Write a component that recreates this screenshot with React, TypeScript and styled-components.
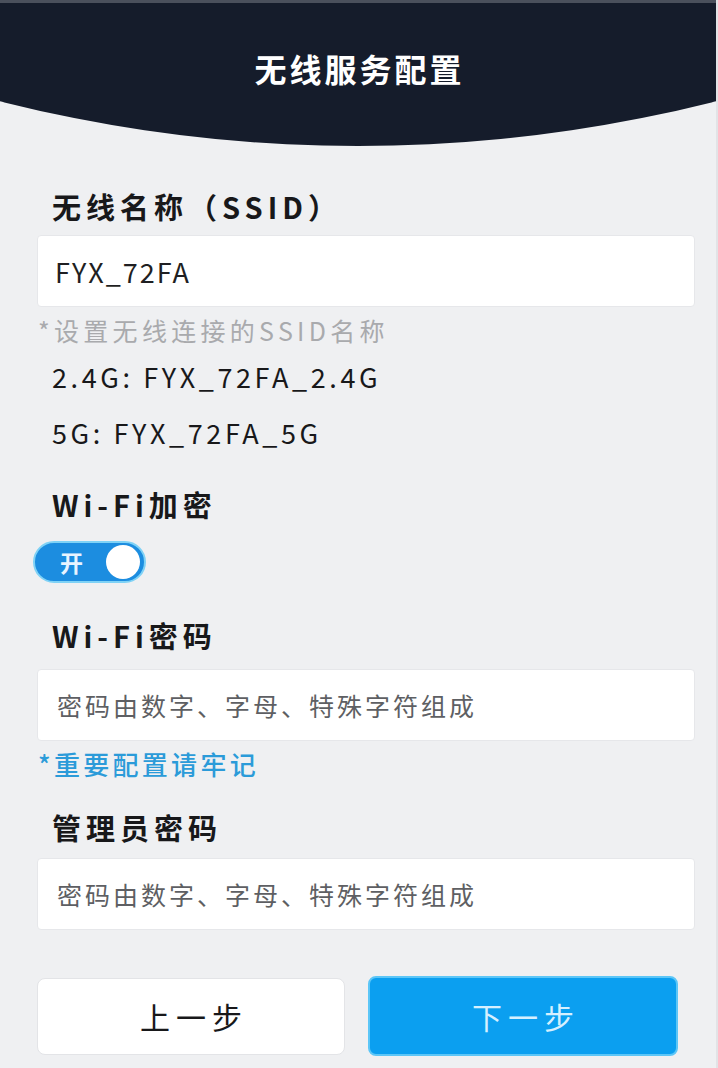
import React from "react";
import styled, { createGlobalStyle } from "styled-components";

const Global = createGlobalStyle`
  html, body { margin: 0; padding: 0; background: #eff0f2; }
  body { font-family: "Noto Sans CJK SC", "Noto Sans", sans-serif; }
  * { box-sizing: border-box; }
`;

const Page = styled.div`
  width: 718px;
  height: 1068px;
  background: #eff0f2;
  border-right: 2px solid #e2e3e6;
  overflow: hidden;
  display: flex;
  flex-direction: column;
`;

const Header = styled.header`
  height: 146px;
  background: #151c2b;
  border-top: 3px solid #4a505c;
  clip-path: circle(1455px at 50% calc(146px - 1455px));
  display: flex;
  justify-content: center;
  padding-top: 45px;
`;

const Title = styled.h1`
  margin: 0;
  padding-left: 3px;
  font-size: 32px;
  line-height: 40px;
  font-weight: 700;
  letter-spacing: 3px;
  color: #ffffff;
`;

const Main = styled.main`
  display: flex;
  flex-direction: column;
  padding: 0 21px 0 37px;
`;

const Label = styled.div<{ $mt: number }>`
  margin-top: ${(p) => p.$mt}px;
  padding-left: 15px;
  font-size: 29px;
  line-height: 40px;
  font-weight: 700;
  letter-spacing: 5px;
  color: #18181a;
`;

const Input = styled.div<{ $mt: number; $placeholder?: boolean }>`
  margin-top: ${(p) => p.$mt}px;
  height: 72px;
  background: #ffffff;
  border: 1px solid #e6e7ea;
  border-radius: 4px;
  display: flex;
  align-items: center;
  padding-left: ${(p) => (p.$placeholder ? 19 : 17)}px;
  font-size: ${(p) => (p.$placeholder ? 25 : 27)}px;
  letter-spacing: ${(p) => (p.$placeholder ? 3 : 2)}px;
  color: ${(p) => (p.$placeholder ? "#5e5f63" : "#1f1f22")};
`;

const Hint = styled.div<{ $mt: number; $blue?: boolean }>`
  margin-top: ${(p) => p.$mt}px;
  padding-left: 1px;
  font-size: ${(p) => (p.$blue ? 26 : 25)}px;
  line-height: 34px;
  letter-spacing: ${(p) => (p.$blue ? 3.3 : 4.3)}px;
  font-weight: ${(p) => (p.$blue ? 500 : 400)};
  color: ${(p) => (p.$blue ? "#2b9bd9" : "#a9aaad")};
`;

const Info = styled.div<{ $mt: number }>`
  margin-top: ${(p) => p.$mt}px;
  padding-left: 15px;
  font-size: 27px;
  line-height: 40px;
  letter-spacing: 3.6px;
  color: #18181a;
`;

const Toggle = styled.div`
  margin-top: 17px;
  width: 113px;
  height: 42px;
  border-radius: 21px;
  background: #1c8de0;
  border: 2px solid #7fd2f6;
  display: flex;
  align-items: center;
  justify-content: space-between;
  padding: 0 4px 0 25px;
  margin-left: -4px;
`;

const ToggleText = styled.span`
  font-size: 23px;
  font-weight: 700;
  color: #e8f4ff;
`;

const Knob = styled.span`
  width: 34px;
  height: 34px;
  border-radius: 50%;
  background: #ffffff;
`;

const ButtonRow = styled.div`
  margin-top: 46px;
  width: 641px;
  display: flex;
  gap: 23px;
  align-items: center;
`;

const Button = styled.button<{ $primary?: boolean }>`
  flex: 1;
  height: ${(p) => (p.$primary ? 80 : 77)}px;
  border-radius: 8px;
  border: ${(p) => (p.$primary ? "2px solid #5cc6f7" : "1px solid #e3e4e7")};
  background: ${(p) => (p.$primary ? "#0b9ff0" : "#ffffff")};
  color: ${(p) => (p.$primary ? "#d6f0ff" : "#18181a")};
  font-family: "Noto Sans CJK SC", sans-serif;
  font-size: 30px;
  letter-spacing: 6px;
  padding: 0 0 0 6px;
`;

export default function App() {
  return (
    <>
      <Global />
      <Page>
        <Header>
          <Title>无线服务配置</Title>
        </Header>
        <Main>
          <Label $mt={40}>无线名称（SSID）</Label>
          <Input $mt={9}>FYX_72FA</Input>
          <Hint $mt={6}>*设置无线连接的SSID名称</Hint>
          <Info $mt={10}>2.4G: FYX_72FA_2.4G</Info>
          <Info $mt={16}>5G: FYX_72FA_5G</Info>
          <Label $mt={31}>Wi-Fi加密</Label>
          <Toggle>
            <ToggleText>开</ToggleText>
            <Knob />
          </Toggle>
          <Label $mt={32}>Wi-Fi密码</Label>
          <Input $mt={14} $placeholder>密码由数字、字母、特殊字符组成</Input>
          <Hint $mt={6} $blue>*重要配置请牢记</Hint>
          <Label $mt={26}>管理员密码</Label>
          <Input $mt={11} $placeholder>密码由数字、字母、特殊字符组成</Input>
          <ButtonRow>
            <Button>上一步</Button>
            <Button $primary>下一步</Button>
          </ButtonRow>
        </Main>
      </Page>
    </>
  );
}
